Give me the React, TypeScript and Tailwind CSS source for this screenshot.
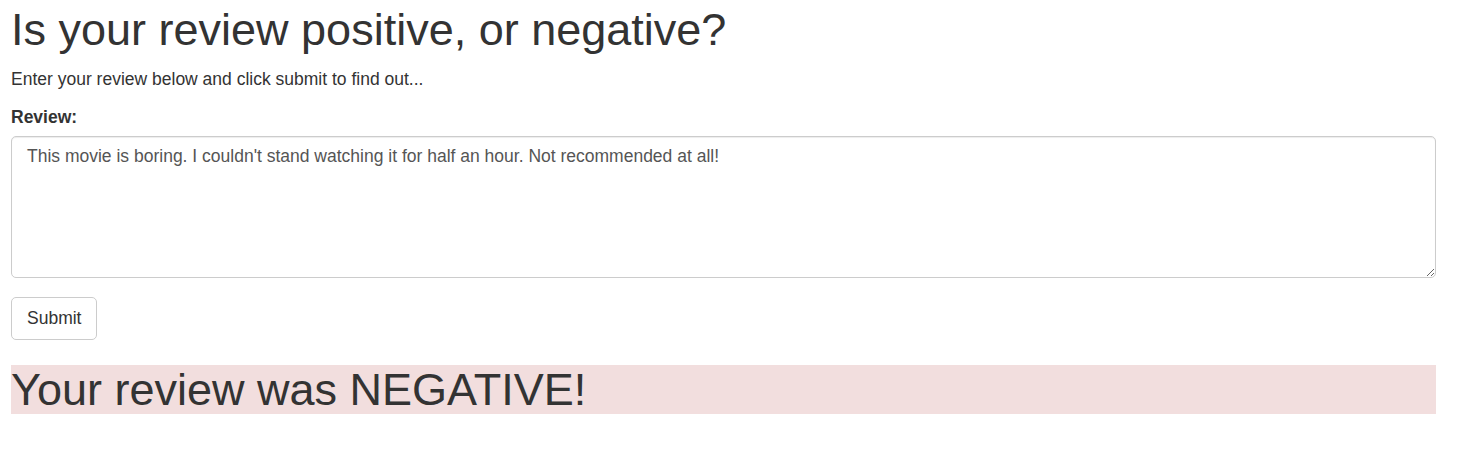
export default function App() {
  return (
    <div className="min-h-screen bg-white font-['Liberation_Sans',Arial,sans-serif] text-[17.5px] leading-[25px] text-[#333]">
      <div className="w-[1425px] ml-[11px] pt-[5px]">
        <h1 className="text-[45px] leading-[49.5px] font-normal mb-[12.5px]">
          Is your review positive, or negative?
        </h1>
        <p className="mb-[12.5px]">Enter your review below and click submit to find out...</p>

        <form className="mb-[25px]" onSubmit={(e) => e.preventDefault()}>
          <div className="mb-[18.75px]">
            <label htmlFor="review" className="block font-bold mb-[6.25px]">
              Review:
            </label>
            <textarea
              id="review"
              rows={5}
              defaultValue="This movie is boring. I couldn't stand watching it for half an hour. Not recommended at all!"
              className="block w-full h-[142.5px] px-[15px] py-[7.5px] border-[1.25px] border-[#ccc] rounded-[5px] text-[17.5px] leading-[25px] text-[#555] shadow-[inset_0_1px_1px_rgba(0,0,0,0.075)] outline-none"
            />
          </div>
          <button
            type="submit"
            className="block h-[42.5px] px-[15px] py-[7.5px] border-[1.25px] border-[#ccc] rounded-[5px] bg-white text-[17.5px] leading-[25px] text-[#333]"
          >
            Submit
          </button>
        </form>

        <h1 className="bg-[#f2dede] text-[45px] leading-[49.5px] font-normal">Your review was NEGATIVE!</h1>
      </div>
    </div>
  )
}
